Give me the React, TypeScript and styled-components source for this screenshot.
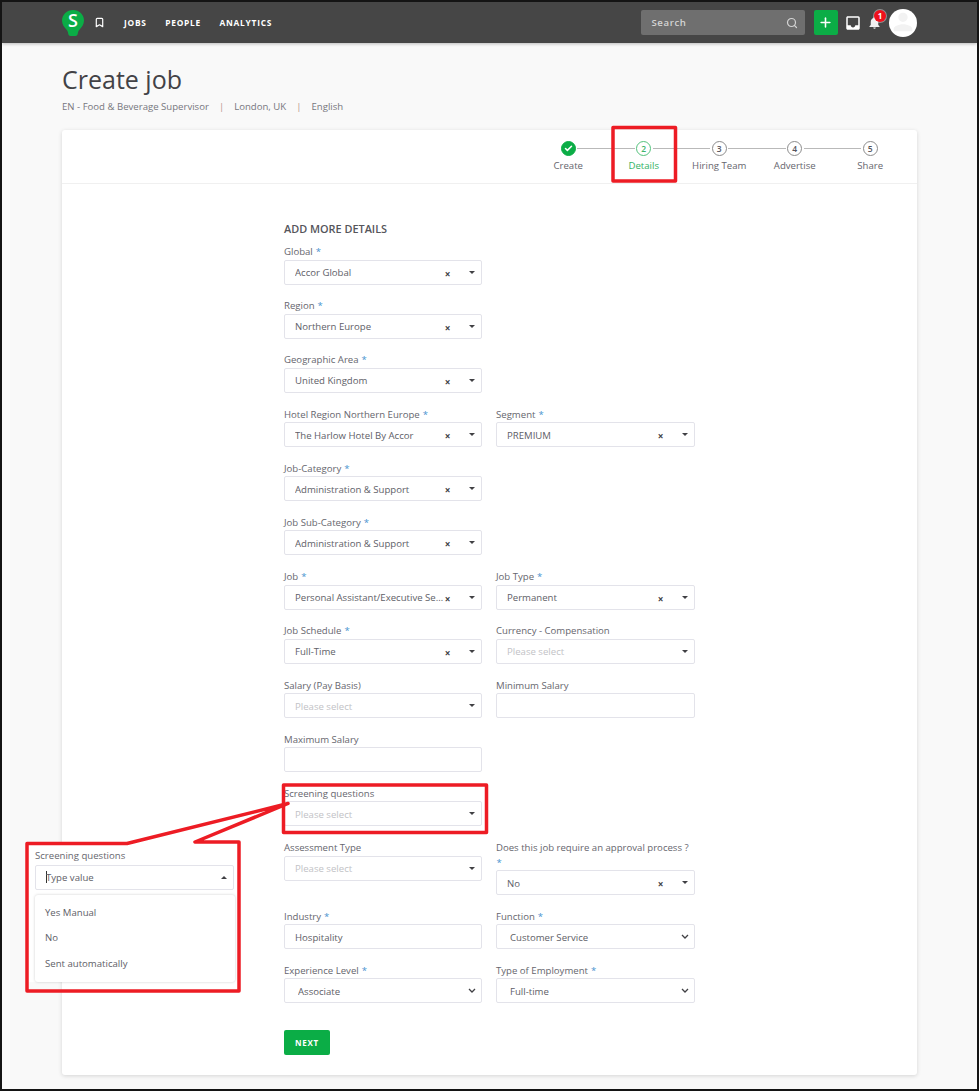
import { Bookmark, Check, Plus, Search } from "lucide-react";
import { MdInbox, MdNotifications, MdPerson } from "react-icons/md";
import styled, { createGlobalStyle } from "styled-components";

const GlobalStyle = createGlobalStyle`
  html, body {
    margin: 0;
    padding: 0;
    background: #ffffff;
  }
  body {
    font-family: "Open Sans", "Liberation Sans", sans-serif;
  }
  * {
    box-sizing: border-box;
  }
`;

const Frame = styled.div`
  position: relative;
  width: 979px;
  height: 1091px;
  border: solid #141414;
  border-width: 2px 2.5px 2.5px 2px;
  background: #f9f9f9;
  overflow: hidden;
`;

const TopBar = styled.header`
  height: 41px;
  padding: 0 60px;
  display: flex;
  align-items: center;
  background: #464646;
  box-shadow: 0 1px 3px #00000040;
`;

const Logo = styled.svg`
  width: 22px;
  height: 26px;
`;

const LogoLetter = styled.text`
  fill: #ffffff;
  font-family: "Open Sans", sans-serif;
  font-size: 18px;
  font-weight: 600;
  text-anchor: middle;
`;

const BookmarkButton = styled.span`
  display: flex;
  margin: 0 19px 0 10px;
  color: #ffffff;
`;

const NavLink = styled.a`
  margin-right: 18.5px;
  color: #ffffff;
  font-size: 8.4px;
  font-weight: 700;
  letter-spacing: 0.75px;
`;

const TopActions = styled.div`
  margin-left: auto;
  display: flex;
  align-items: center;
`;

const SearchBox = styled.div`
  width: 164px;
  height: 25px;
  padding: 0 7px 0 11px;
  display: flex;
  align-items: center;
  justify-content: space-between;
  border-radius: 2px;
  background: #6f6f6f;
  color: #d4d4d4;
  font-size: 9.6px;
  font-weight: 600;
  letter-spacing: 0.6px;
`;

const AddButton = styled.button`
  width: 24px;
  height: 25px;
  margin-left: 9px;
  padding: 0;
  display: flex;
  align-items: center;
  justify-content: center;
  border: 0;
  border-radius: 2px;
  background: #0bad46;
  color: #ffffff;
`;

const InboxIcon = styled(MdInbox)`
  margin-left: 6px;
  color: #ffffff;
`;

const BellWrap = styled.span`
  position: relative;
  display: flex;
  margin-left: 5.5px;
  color: #f0f0f0;
`;

const Badge = styled.span`
  position: absolute;
  top: -5.5px;
  left: 7px;
  width: 12px;
  height: 12px;
  display: flex;
  align-items: center;
  justify-content: center;
  border-radius: 50%;
  background: #f0101c;
  box-shadow: 0 0 0 1px #ffffff66;
  color: #ffffff;
  font-size: 8px;
  font-weight: 700;
`;

const Avatar = styled.span`
  width: 28px;
  height: 28px;
  margin-left: 7px;
  display: flex;
  align-items: flex-end;
  justify-content: center;
  overflow: hidden;
  border-radius: 50%;
  background: #ffffff;
  color: #f2f2f2;
`;

const Main = styled.main`
  padding: 17.5px 60px 0;
`;

const PageTitle = styled.h1`
  margin: 0;
  color: #424246;
  font-size: 25px;
  font-weight: 400;
  line-height: 36px;
`;

const Crumbs = styled.div`
  margin-top: 2px;
  display: flex;
  color: #77777e;
  font-size: 9.6px;
  line-height: 16px;
`;

const CrumbDivider = styled.span`
  margin: 0 10px;
  color: #b7948a;
`;

const Card = styled.section`
  height: 945px;
  margin-top: 15.5px;
  border-radius: 3px;
  background: #ffffff;
  box-shadow: 0 1px 4px #00000026;
`;

const Stepper = styled.div`
  height: 54px;
  padding: 11px 9px 0 0;
  display: flex;
  justify-content: flex-end;
  border-bottom: 1.5px solid #f0f0f0;
`;

const Step = styled.div`
  width: 75.5px;
  display: flex;
  flex-direction: column;
  align-items: center;
`;

const StepTrack = styled.div`
  width: 100%;
  display: flex;
  align-items: center;
`;

const StepLine = styled.span<{ $hidden: boolean }>`
  flex: 1;
  height: 1px;
  background: ${(p) => (p.$hidden ? "transparent" : "#b9b9b9")};
`;

const StepCircle = styled.span<{ $state: "done" | "active" | "todo" }>`
  width: 15px;
  height: 15px;
  margin: 0 1.5px;
  display: flex;
  align-items: center;
  justify-content: center;
  border-radius: 50%;
  border: 1px solid
    ${(p) => (p.$state === "todo" ? "#8c8c8c" : p.$state === "active" ? "#54c27c" : "#0bad46")};
  background: ${(p) => (p.$state === "done" ? "#0bad46" : "#ffffff")};
  color: ${(p) => (p.$state === "done" ? "#ffffff" : p.$state === "active" ? "#3fb56c" : "#55555c")};
  font-size: 8.5px;
  font-weight: 600;
`;

const StepLabel = styled.span<{ $active: boolean }>`
  margin-top: 2.5px;
  color: ${(p) => (p.$active ? "#34b365" : "#66666e")};
  font-size: 9.6px;
  line-height: 14px;
  white-space: nowrap;
`;

const FormArea = styled.form`
  padding: 37px 0 0 222px;
`;

const SectionHeading = styled.h2`
  margin: 0 0 8px;
  color: #55555b;
  font-size: 10.9px;
  font-weight: 600;
  line-height: 16px;
`;

const FieldGrid = styled.div`
  display: grid;
  grid-template-columns: 198px 199px;
  column-gap: 14px;
  row-gap: 14.7px;
  align-items: start;
`;

const Label = styled.label`
  display: block;
  color: #66666e;
  font-size: 9.6px;
  line-height: 14.5px;
`;

const Required = styled.span`
  margin-left: 0.5px;
  color: #4a94cf;
`;

const Control = styled.div`
  width: 100%;
  height: 25px;
  padding: 0 5px 0 10px;
  display: flex;
  align-items: center;
  border: 1px solid #e3e3ea;
  border-radius: 2px;
  background: #ffffff;
`;

const Value = styled.span<{ $placeholder?: boolean }>`
  flex: 1;
  min-width: 0;
  margin-right: -2px;
  padding-top: 1px;
  overflow: hidden;
  color: ${(p) => (p.$placeholder ? "#c2c2c6" : "#606067")};
  font-size: 9.6px;
  text-overflow: ellipsis;
  white-space: nowrap;
`;

const Clear = styled.span`
  width: 9px;
  margin-top: 3px;
  color: #404044;
  font-size: 10px;
  font-weight: 700;
  line-height: 10px;
  text-align: center;
`;

const Caret = styled.span<{ $up?: boolean }>`
  width: 0;
  height: 0;
  margin-left: 17px;
  margin-right: 1px;
  border-left: 3.5px solid transparent;
  border-right: 3.5px solid transparent;
  border-top: ${(p) => (p.$up ? "0" : "3.5px solid #404044")};
  border-bottom: ${(p) => (p.$up ? "3.5px solid #404044" : "0")};
`;

const TextInput = styled.input`
  display: block;
  width: 100%;
  height: 25px;
  padding: 1px 10px 0;
  border: 1px solid #e3e3ea;
  border-radius: 2px;
  outline: none;
  background: #ffffff;
  color: #606067;
  font-family: inherit;
  font-size: 9.6px;
`;

const NativeSelect = styled.select`
  display: block;
  width: 100%;
  height: 25px;
  padding: 1px 13px 0;
  appearance: none;
  border: 1px solid #e3e3ea;
  border-radius: 2px;
  outline: none;
  background: #ffffff
    url("data:image/svg+xml,%3Csvg xmlns='http://www.w3.org/2000/svg' width='8' height='5'%3E%3Cpath d='M1 1l3 3 3-3' fill='none' stroke='%23404044' stroke-width='1.3'/%3E%3C/svg%3E")
    no-repeat right 5px center;
  color: #606067;
  font-family: inherit;
  font-size: 9.6px;
`;

const NextButton = styled.button`
  width: 46px;
  height: 25px;
  margin-top: 27px;
  padding: 0;
  border: 0;
  border-radius: 2px;
  background: #0bad46;
  color: #ffffff;
  font-family: inherit;
  font-size: 8px;
  font-weight: 700;
  letter-spacing: 0.7px;
`;

const MarkupLayer = styled.svg`
  position: absolute;
  top: -2px;
  left: -2px;
  width: 979px;
  height: 1091px;
  pointer-events: none;
`;

const CalloutPanel = styled.div`
  position: absolute;
  top: 843px;
  left: 26px;
  width: 211px;
  height: 137px;
  padding: 4px 5px 0 7px;
  background: #ffffff;
`;

const PopupControl = styled(Control)`
  width: 199px;
  margin-top: 1px;
`;

const Cursor = styled.span`
  width: 1px;
  height: 12px;
  margin-right: -1px;
  background: #333333;
`;

const PopupMenu = styled.ul`
  width: 200px;
  height: 87px;
  margin: 5.5px 0 0;
  padding: 5px 10px;
  list-style: none;
  border-radius: 3px;
  background: #ffffff;
  box-shadow: 0 0 3px #00000030;
`;

const PopupItem = styled.li`
  color: #606067;
  font-size: 9.6px;
  line-height: 25.4px;
`;

type FieldDef = {
  label: string;
  value?: string;
  required?: boolean;
  kind?: "select" | "input" | "native";
  column?: "left" | "right";
};

const steps = ["Create", "Details", "Hiring Team", "Advertise", "Share"];

const fields: FieldDef[] = [
  { label: "Global", value: "Accor Global", required: true },
  { label: "", kind: "input", column: "right" },
  { label: "Region", value: "Northern Europe", required: true },
  { label: "", kind: "input", column: "right" },
  { label: "Geographic Area", value: "United Kingdom", required: true },
  { label: "", kind: "input", column: "right" },
  { label: "Hotel Region Northern Europe", value: "The Harlow Hotel By Accor", required: true },
  { label: "Segment", value: "PREMIUM", required: true },
  { label: "Job-Category", value: "Administration & Support", required: true },
  { label: "", kind: "input", column: "right" },
  { label: "Job Sub-Category", value: "Administration & Support", required: true },
  { label: "", kind: "input", column: "right" },
  { label: "Job", value: "Personal Assistant/Executive Secretary", required: true },
  { label: "Job Type", value: "Permanent", required: true },
  { label: "Job Schedule", value: "Full-Time", required: true },
  { label: "Currency - Compensation" },
  { label: "Salary (Pay Basis)" },
  { label: "Minimum Salary", kind: "input" },
  { label: "Maximum Salary", kind: "input" },
  { label: "", kind: "input", column: "right" },
  { label: "Screening questions" },
  { label: "", kind: "input", column: "right" },
  { label: "Assessment Type" },
  { label: "Does this job require an approval process ?", value: "No", required: true },
  { label: "Industry", value: "Hospitality", required: true, kind: "input" },
  { label: "Function", value: "Customer Service", required: true, kind: "native" },
  { label: "Experience Level", value: "Associate", required: true, kind: "native" },
  { label: "Type of Employment", value: "Full-time", required: true, kind: "native" },
];

function SelectControl({ value }: { value?: string }) {
  return (
    <Control>
      <Value $placeholder={!value}>{value ?? "Please select"}</Value>
      {value && <Clear>×</Clear>}
      <Caret />
    </Control>
  );
}

function Field({ field }: { field: FieldDef }) {
  // empty right hand cells just keep the grid rows in step
  if (field.column === "right") return <div />;

  const kind = field.kind ?? "select";
  return (
    <div>
      <Label>
        {field.label} {field.required && <Required>*</Required>}
      </Label>
      {kind === "select" && <SelectControl value={field.value} />}
      {kind === "input" && <TextInput readOnly value={field.value ?? ""} />}
      {kind === "native" && (
        <NativeSelect value={field.value} onChange={() => undefined}>
          <option>{field.value}</option>
        </NativeSelect>
      )}
    </div>
  );
}

export default function App() {
  return (
    <>
      <GlobalStyle />
      <Frame>
        <TopBar>
          <Logo viewBox="0 0 22 27" preserveAspectRatio="none">
            <path
              d="M11 0a11 11 0 0 1 11 11c0 4.2-2.3 7-4.6 9.6-1 1.2-1.4 2.4-1.6 3.9-.2 1.5-1 2.5-2.3 2.5H8.5c-1.3 0-2.1-1-2.3-2.5-.2-1.5-.6-2.7-1.6-3.9C2.3 18 0 15.2 0 11A11 11 0 0 1 11 0z"
              fill="#0bad46"
            />
            <LogoLetter x="11" y="18">
              S
            </LogoLetter>
          </Logo>
          <BookmarkButton>
            <Bookmark size={11} strokeWidth={2.6} />
          </BookmarkButton>
          <NavLink>JOBS</NavLink>
          <NavLink>PEOPLE</NavLink>
          <NavLink>ANALYTICS</NavLink>
          <TopActions>
            <SearchBox>
              Search
              <Search size={12} strokeWidth={2.4} />
            </SearchBox>
            <AddButton>
              <Plus size={15} strokeWidth={2.5} />
            </AddButton>
            <InboxIcon size={18} />
            <BellWrap>
              <MdNotifications size={15} />
              <Badge>1</Badge>
            </BellWrap>
            <Avatar>
              <MdPerson size={30} />
            </Avatar>
          </TopActions>
        </TopBar>

        <Main>
          <PageTitle>Create job</PageTitle>
          <Crumbs>
            <span>EN - Food &amp; Beverage Supervisor</span>
            <CrumbDivider>|</CrumbDivider>
            <span>London, UK</span>
            <CrumbDivider>|</CrumbDivider>
            <span>English</span>
          </Crumbs>

          <Card>
            <Stepper>
              {steps.map((step, i) => (
                <Step key={step}>
                  <StepTrack>
                    <StepLine $hidden={i === 0} />
                    <StepCircle $state={i === 0 ? "done" : i === 1 ? "active" : "todo"}>
                      {i === 0 ? <Check size={9} strokeWidth={4} /> : i + 1}
                    </StepCircle>
                    <StepLine $hidden={i === steps.length - 1} />
                  </StepTrack>
                  <StepLabel $active={i === 1}>{step}</StepLabel>
                </Step>
              ))}
            </Stepper>

            <FormArea>
              <SectionHeading>ADD MORE DETAILS</SectionHeading>
              <FieldGrid>
                {fields.map((field, i) => (
                  <Field field={field} key={i} />
                ))}
              </FieldGrid>
              <NextButton type="button">NEXT</NextButton>
            </FormArea>
          </Card>
        </Main>

        <CalloutPanel>
          <Label>Screening questions</Label>
          <PopupControl>
            <Cursor />
            <Value>Type value</Value>
            <Caret $up />
          </PopupControl>
          <PopupMenu>
            <PopupItem>Yes Manual</PopupItem>
            <PopupItem>No</PopupItem>
            <PopupItem>Sent automatically</PopupItem>
          </PopupMenu>
        </CalloutPanel>

        <MarkupLayer viewBox="0 0 979 1091">
          <g fill="none" stroke="#ed1c24" strokeWidth="3.5" strokeLinejoin="round">
            <rect x="613" y="127.5" width="62.5" height="53.5" />
            <rect x="283.5" y="785" width="203" height="47.5" />
            <path d="M27 843.5H127L288 803.5L195 842H239V991H27Z" />
          </g>
        </MarkupLayer>
      </Frame>
    </>
  );
}
